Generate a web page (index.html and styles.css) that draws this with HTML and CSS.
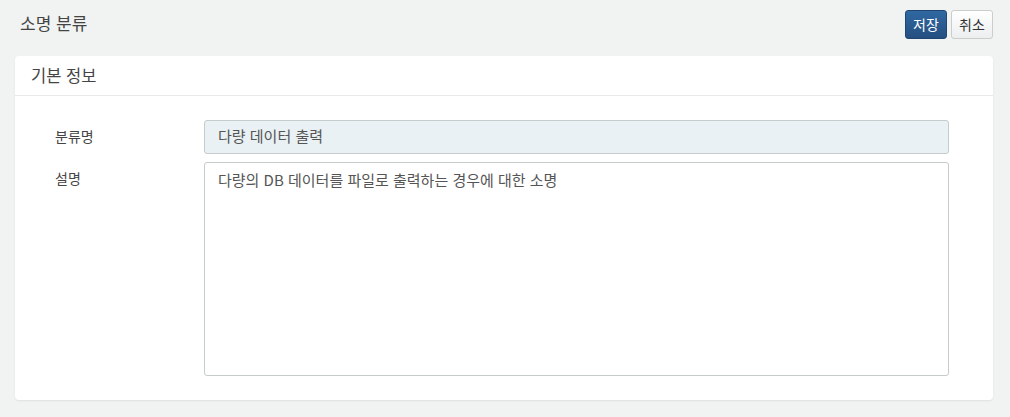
FILE: index.html
```html
<!DOCTYPE html>
<html lang="ko">
<head>
<meta charset="utf-8">
<link rel="stylesheet" href="styles.css">
</head>
<body>
<div class="page">
  <div class="topbar">
    <h1 class="title">소명 분류</h1>
    <div class="actions">
      <button class="btn btn-primary">저장</button>
      <button class="btn btn-default">취소</button>
    </div>
  </div>
  <div class="card">
    <div class="card-header">기본 정보</div>
    <div class="card-body">
      <div class="row">
        <label class="label">분류명</label>
        <div class="field input readonly">다량 데이터 출력</div>
      </div>
      <div class="row">
        <label class="label">설명</label>
        <div class="field textarea">다량의 DB 데이터를 파일로 출력하는 경우에 대한 소명</div>
      </div>
    </div>
  </div>
</div>
</body>
</html>
```

FILE: styles.css
```css
* { box-sizing: border-box; }
html, body { margin: 0; padding: 0; }
body {
  background: #f1f3f3;
  font-family: "Noto Sans CJK KR", "Liberation Sans", sans-serif;
  color: #555;
  width: 1010px;
  height: 417px;
  overflow: hidden;
}
.page { padding: 10px 17px 0 15px; }
.topbar {
  display: flex;
  justify-content: space-between;
  align-items: flex-start;
  height: 46px;
}
.title {
  margin: 0;
  padding: 1px 0 0 5px;
  font-size: 17px;
  font-weight: normal;
  color: #444;
  line-height: 24px;
}
.actions { display: flex; gap: 4px; }
.btn {
  font-family: inherit;
  font-size: 14px;
  height: 29px;
  width: 42px;
  padding: 0;
  border-radius: 3px;
  line-height: 27px;
}
.btn-primary {
  background: linear-gradient(#3068a2, #254f80);
  border: 1px solid #1f4570;
  color: #fff;
}
.btn-default {
  background: linear-gradient(#fff, #eceeef);
  border: 1px solid #ccc;
  color: #333;
}
.card {
  background: #fff;
  border-radius: 4px;
  box-shadow: 0 1px 2px rgba(0,0,0,0.08);
  height: 344px;
}
.card-header {
  height: 40px;
  border-bottom: 1px solid #e8eaea;
  padding: 8px 16px;
  font-size: 16.5px;
  color: #444;
  line-height: 22px;
}
.card-body { padding: 24px 44px 0 40px; }
.row { display: flex; margin-bottom: 8px; }
.label {
  width: 149px;
  font-size: 14px;
  font-weight: normal;
  color: #444;
  padding-top: 6px;
  line-height: 20px;
}
.field {
  flex: 1;
  border: 1px solid #c6cbcc;
  border-radius: 3px;
  font-size: 15px;
  color: #555;
  padding: 5px 13px;
  line-height: 20px;
}
.input { height: 34px; }
.readonly { background: #e9f1f4; }
.textarea { height: 214px; background: #fff; padding-top: 7px; }
```
